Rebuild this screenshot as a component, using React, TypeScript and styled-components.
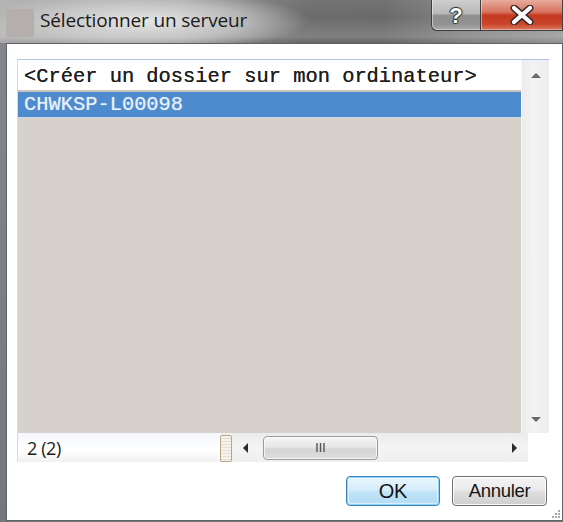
import React from "react";
import styled, { createGlobalStyle } from "styled-components";

const Global = createGlobalStyle`
  html, body { margin: 0; padding: 0; background: #ffffff; }
  body { font-family: "Liberation Sans", Arial, sans-serif; }
  * { box-sizing: border-box; }
`;

const Frame = styled.div`
  width: 563px;
  height: 522px;
  display: flex;
  flex-direction: column;
  background: linear-gradient(to bottom, #84888d, #74787d);
  overflow: hidden;
`;

const TitleBar = styled.div`
  height: 43px;
  flex: none;
  display: flex;
  align-items: flex-start;
  position: relative;
  background:
    radial-gradient(ellipse 165px 30px at 145px 21px, rgba(232,232,232,0.97), rgba(215,215,215,0.6) 62%, rgba(200,200,200,0) 100%),
    linear-gradient(to bottom, rgba(255,255,255,0.06), rgba(255,255,255,0) 40%, rgba(255,255,255,0.14) 85%, rgba(0,0,0,0.06)),
    linear-gradient(to right, #b0b0b0 0%, #959595 32%, #6c6c6c 54%, #6a6a6a 68%, #838383 82%, #999999 100%);
`;

const AppIcon = styled.div`
  width: 28px;
  height: 28px;
  margin: 9px 0 0 6px;
  background: #b4afad;
  flex: none;
`;

const Title = styled.div`
  margin: 7px 0 0 6px;
  font-family: "Open Sans", "Noto Sans", sans-serif;
  font-size: 19px;
  line-height: 26px;
  color: #1a1a1a;
  letter-spacing: -0.15px;
`;

const Captions = styled.div`
  margin-left: auto;
  display: flex;
  align-self: flex-start;
  height: 31px;
`;

const CaptionButton = styled.div<{ $variant: "help" | "close" }>`
  height: 31px;
  width: ${(p) => (p.$variant === "help" ? "49px" : "83px")};
  display: flex;
  align-items: center;
  justify-content: center;
  border: 1px solid #3f3f3f;
  border-top: none;
  border-right: ${(p) => (p.$variant === "help" ? "none" : "1px solid #3f3f3f")};
  border-radius: ${(p) => (p.$variant === "help" ? "0 0 0 6px" : "0")};
  box-shadow: inset 1px 0 0 rgba(255,255,255,0.45), inset 0 -1px 0 rgba(255,255,255,0.35);
  background: ${(p) =>
    p.$variant === "help"
      ? "linear-gradient(to bottom, #cfcfcf 0%, #b8b8b8 45%, #8f8f8f 52%, #929292 80%, #acacac 100%)"
      : "linear-gradient(to bottom, #e8ab9d 0%, #d7735f 40%, #c4391f 52%, #c8452b 80%, #dc7a5f 100%)"};
`;

const HelpGlyph = styled.span`
  font-family: "Liberation Sans", Arial, sans-serif;
  font-weight: bold;
  font-size: 22px;
  line-height: 1;
  color: #ffffff;
  margin-top: 1px;
  text-shadow: 0 0 1px #222, 1px 0 1px #333, -1px 0 1px #333, 0 1px 1px #333, 0 -1px 1px #333;
`;

const Client = styled.div`
  flex: 1;
  margin: 0 0 1px 6px;
  border: 1px solid #5f6368;
  background: #ffffff;
  padding: 15px 14px 0 10px;
  display: flex;
  flex-direction: column;
  position: relative;
`;

const ListBox = styled.div`
  width: 532px;
  height: 403px;
  display: flex;
  flex-direction: column;
  border-top: 1px solid #abc6e6;
  border-left: 1px solid #cddcee;
`;

const ListTop = styled.div`
  height: 373px;
  display: flex;
  flex: none;
`;

const Items = styled.div`
  flex: 1;
  background: #d6d2cb;
  display: flex;
  flex-direction: column;
`;

const Item = styled.div<{ $selected?: boolean }>`
  height: ${(p) => (p.$selected ? "26px" : "32px")};
  padding-left: 6px;
  padding-top: ${(p) => (p.$selected ? "0" : "2px")};
  display: flex;
  align-items: center;
  font-family: "Liberation Mono", "Courier New", monospace;
  font-size: 20.4px;
  white-space: nowrap;
  color: ${(p) => (p.$selected ? "#e9f1fb" : "#1f1f1f")};
  background: ${(p) => (p.$selected ? "#4d8bce" : "#ffffff")};
  border-bottom: ${(p) => (p.$selected ? "1px solid #c9d7e6" : "2px solid #c8c4bc")};
  text-shadow: ${(p) => (p.$selected ? "0 0 1px rgba(255,255,255,0.5)" : "0 0 0.6px #1f1f1f")};
`;

const VScroll = styled.div`
  width: 28px;
  flex: none;
  background: linear-gradient(to right, #ececec, #f3f3f3 40%, #eeeeee);
  border-left: 1px solid #f8f8f8;
  display: flex;
  flex-direction: column;
  justify-content: space-between;
  align-items: center;
  padding: 12px 0 10px;
`;

const Arrow = styled.svg`
  display: block;
`;

const BottomBar = styled.div`
  width: 510px;
  height: 29px;
  flex: none;
  display: flex;
  background: #f0f0f0;
`;

const Status = styled.div`
  width: 202px;
  display: flex;
  align-items: center;
  padding-left: 9px;
  font-family: "Open Sans", "Noto Sans", sans-serif;
  font-size: 18px;
  letter-spacing: -0.4px;
  color: #1c1c1c;
  background: linear-gradient(to bottom, #f4f7fb, #ffffff 60%, #f1f1f1);
`;

const Splitter = styled.div`
  width: 12px;
  margin: 2px 0 0;
  height: 27px;
  border: 1px solid #b9a58a;
  border-radius: 2px;
  background: repeating-linear-gradient(to bottom, #f7f3ec 0 2px, #e6ded2 2px 3px);
`;

const HScroll = styled.div`
  flex: 1;
  display: flex;
  align-items: center;
  padding: 0 10px 0 10px;
  background: linear-gradient(to bottom, #ececec, #f4f4f4 50%, #efefef);
`;

const Thumb = styled.div`
  width: 115px;
  height: 24px;
  margin-left: 14px;
  border: 1px solid #9a9a9a;
  border-radius: 4px;
  background: linear-gradient(to bottom, #f6f6f6, #e6e6e6 45%, #d6d6d6 55%, #dcdcdc);
  box-shadow: inset 0 0 0 1px rgba(255,255,255,0.7);
  display: flex;
  align-items: center;
  justify-content: center;
`;

const Spacer = styled.div`
  flex: 1;
`;

const ButtonRow = styled.div`
  margin-top: 14px;
  display: flex;
  justify-content: flex-end;
  gap: 12px;
  padding-right: 1px;
`;

const Button = styled.div<{ $default?: boolean }>`
  width: ${(p) => (p.$default ? "94px" : "95px")};
  height: 30px;
  border-radius: 4px;
  display: flex;
  align-items: center;
  justify-content: center;
  font-family: "Liberation Sans", Arial, sans-serif;
  font-size: ${(p) => (p.$default ? "20px" : "18.5px")};
  letter-spacing: -0.3px;
  color: #151515;
  border: 1px solid ${(p) => (p.$default ? "#3a84bb" : "#707070")};
  background: ${(p) =>
    p.$default
      ? "linear-gradient(to bottom, #e9f5fc, #d6eefb 45%, #bfe3f8 55%, #b4dcf4)"
      : "linear-gradient(to bottom, #f4f4f4, #ebebeb 45%, #dddddd 55%, #cfcfcf)"};
  box-shadow: ${(p) =>
    p.$default
      ? "inset 0 0 0 1px #8fd2f3, inset 0 0 0 2px rgba(255,255,255,0.5)"
      : "inset 0 0 0 1px rgba(255,255,255,0.85)"};
`;

const Grip = styled.svg`
  position: absolute;
  right: 1px;
  bottom: 1px;
`;

const Triangle = ({ dir, color = "#5b5b5b" }: { dir: "up" | "down" | "left" | "right"; color?: string }) => {
  const pts = {
    up: "0,6 5,1 10,6",
    down: "0,1 10,1 5,6",
    left: "6,0 6,10 1,5",
    right: "1,0 1,10 6,5",
  }[dir];
  const vertical = dir === "up" || dir === "down";
  return (
    <Arrow width={vertical ? 10 : 7} height={vertical ? 7 : 10} viewBox={vertical ? "0 0 10 7" : "0 0 7 10"}>
      <polygon points={pts} fill={color} />
    </Arrow>
  );
};

export default function App() {
  return (
    <>
      <Global />
      <Frame>
        <TitleBar>
          <AppIcon />
          <Title>Sélectionner un serveur</Title>
          <Captions>
            <CaptionButton $variant="help">
              <HelpGlyph>?</HelpGlyph>
            </CaptionButton>
            <CaptionButton $variant="close">
              <svg width="26" height="20" viewBox="0 0 26 20">
                <path d="M5 3 L21 17 M21 3 L5 17" stroke="#3a2a28" strokeWidth="7" strokeLinecap="round" />
                <path d="M5 3 L21 17 M21 3 L5 17" stroke="#ffffff" strokeWidth="4.2" strokeLinecap="round" />
              </svg>
            </CaptionButton>
          </Captions>
        </TitleBar>
        <Client>
          <ListBox>
            <ListTop>
              <Items>
                <Item>&lt;Créer un dossier sur mon ordinateur&gt;</Item>
                <Item $selected>CHWKSP-L00098</Item>
              </Items>
              <VScroll>
                <Triangle dir="up" color="#6a6a6a" />
                <Triangle dir="down" color="#6a6a6a" />
              </VScroll>
            </ListTop>
            <BottomBar>
              <Status>2 (2)</Status>
              <Splitter />
              <HScroll>
                <Triangle dir="left" color="#2b2b2b" />
                <Thumb>
                  <svg width="9" height="9" viewBox="0 0 9 9">
                    <path d="M1 0V9M4.5 0V9M8 0V9" stroke="#555" strokeWidth="1.4" />
                  </svg>
                </Thumb>
                <Spacer />
                <Triangle dir="right" color="#2b2b2b" />
              </HScroll>
            </BottomBar>
          </ListBox>
          <ButtonRow>
            <Button $default>OK</Button>
            <Button>Annuler</Button>
          </ButtonRow>
          <Grip width="10" height="10" viewBox="0 0 10 10">
            <g fill="#a8a8a8">
              <rect x="7" y="1" width="2" height="2" />
              <rect x="4" y="4" width="2" height="2" />
              <rect x="7" y="4" width="2" height="2" />
              <rect x="1" y="7" width="2" height="2" />
              <rect x="4" y="7" width="2" height="2" />
              <rect x="7" y="7" width="2" height="2" />
            </g>
          </Grip>
        </Client>
      </Frame>
    </>
  );
}
